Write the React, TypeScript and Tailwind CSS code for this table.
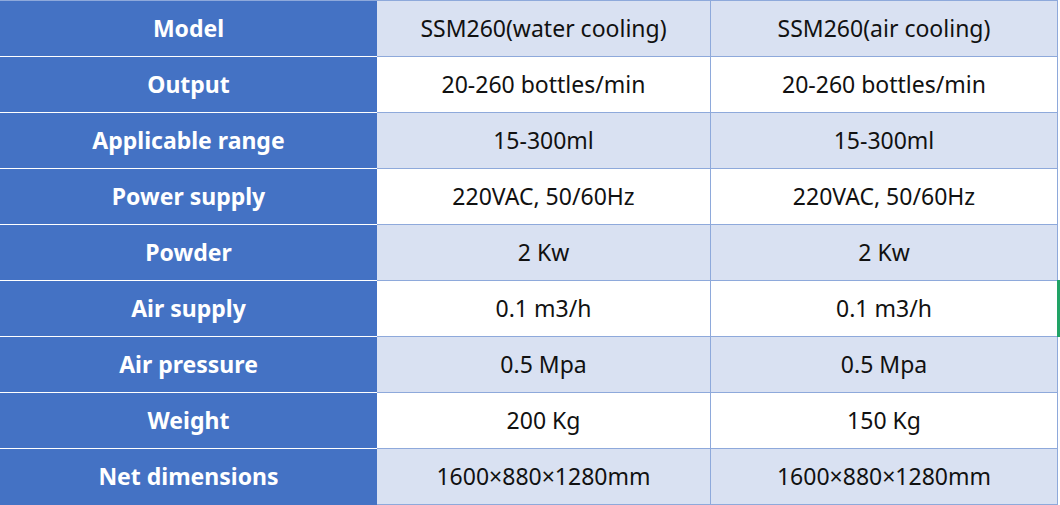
const ROWS = [
  { label: "Model", a: "SSM260(water cooling)", b: "SSM260(air cooling)" },
  { label: "Output", a: "20-260 bottles/min", b: "20-260 bottles/min" },
  { label: "Applicable range", a: "15-300ml", b: "15-300ml" },
  { label: "Power supply", a: "220VAC, 50/60Hz", b: "220VAC, 50/60Hz" },
  { label: "Powder", a: "2 Kw", b: "2 Kw" },
  { label: "Air supply", a: "0.1 m3/h", b: "0.1 m3/h" },
  { label: "Air pressure", a: "0.5 Mpa", b: "0.5 Mpa" },
  { label: "Weight", a: "200 Kg", b: "150 Kg" },
  { label: "Net dimensions", a: "1600×880×1280mm", b: "1600×880×1280mm" },
];

export default function App() {
  return (
    <div className="w-[1060px] h-[505px] bg-white relative" style={{ fontFamily: '"Noto Sans", "Open Sans", sans-serif' }}>
      <div className="w-[1058px] border-t border-[#8EA9DB]">
        {ROWS.map((r, i) => {
          const last = i === ROWS.length - 1;
          const bg = i % 2 === 0 ? "bg-[#D9E1F2]" : "bg-white";
          return (
            <div key={r.label} className="flex h-[56px]">
              <div
                className={`w-[377px] flex items-center justify-center bg-[#4472C4] text-white font-bold text-[23px] border-b ${
                  last ? "border-[#4472C4]" : "border-white"
                }`}
              >
                {r.label}
              </div>
              <div className={`w-[334px] flex items-center justify-center ${bg} text-[#111] text-[23px] border-b border-r border-[#8EA9DB]`}>
                {r.a}
              </div>
              <div className={`flex-1 flex items-center justify-center ${bg} text-[#111] text-[23px] border-b border-r border-[#8EA9DB]`}>
                {r.b}
              </div>
            </div>
          );
        })}
      </div>
      <div className="absolute left-[1057px] top-[280px] w-[3px] h-[57px] bg-[#21A366]" />
    </div>
  );
}
